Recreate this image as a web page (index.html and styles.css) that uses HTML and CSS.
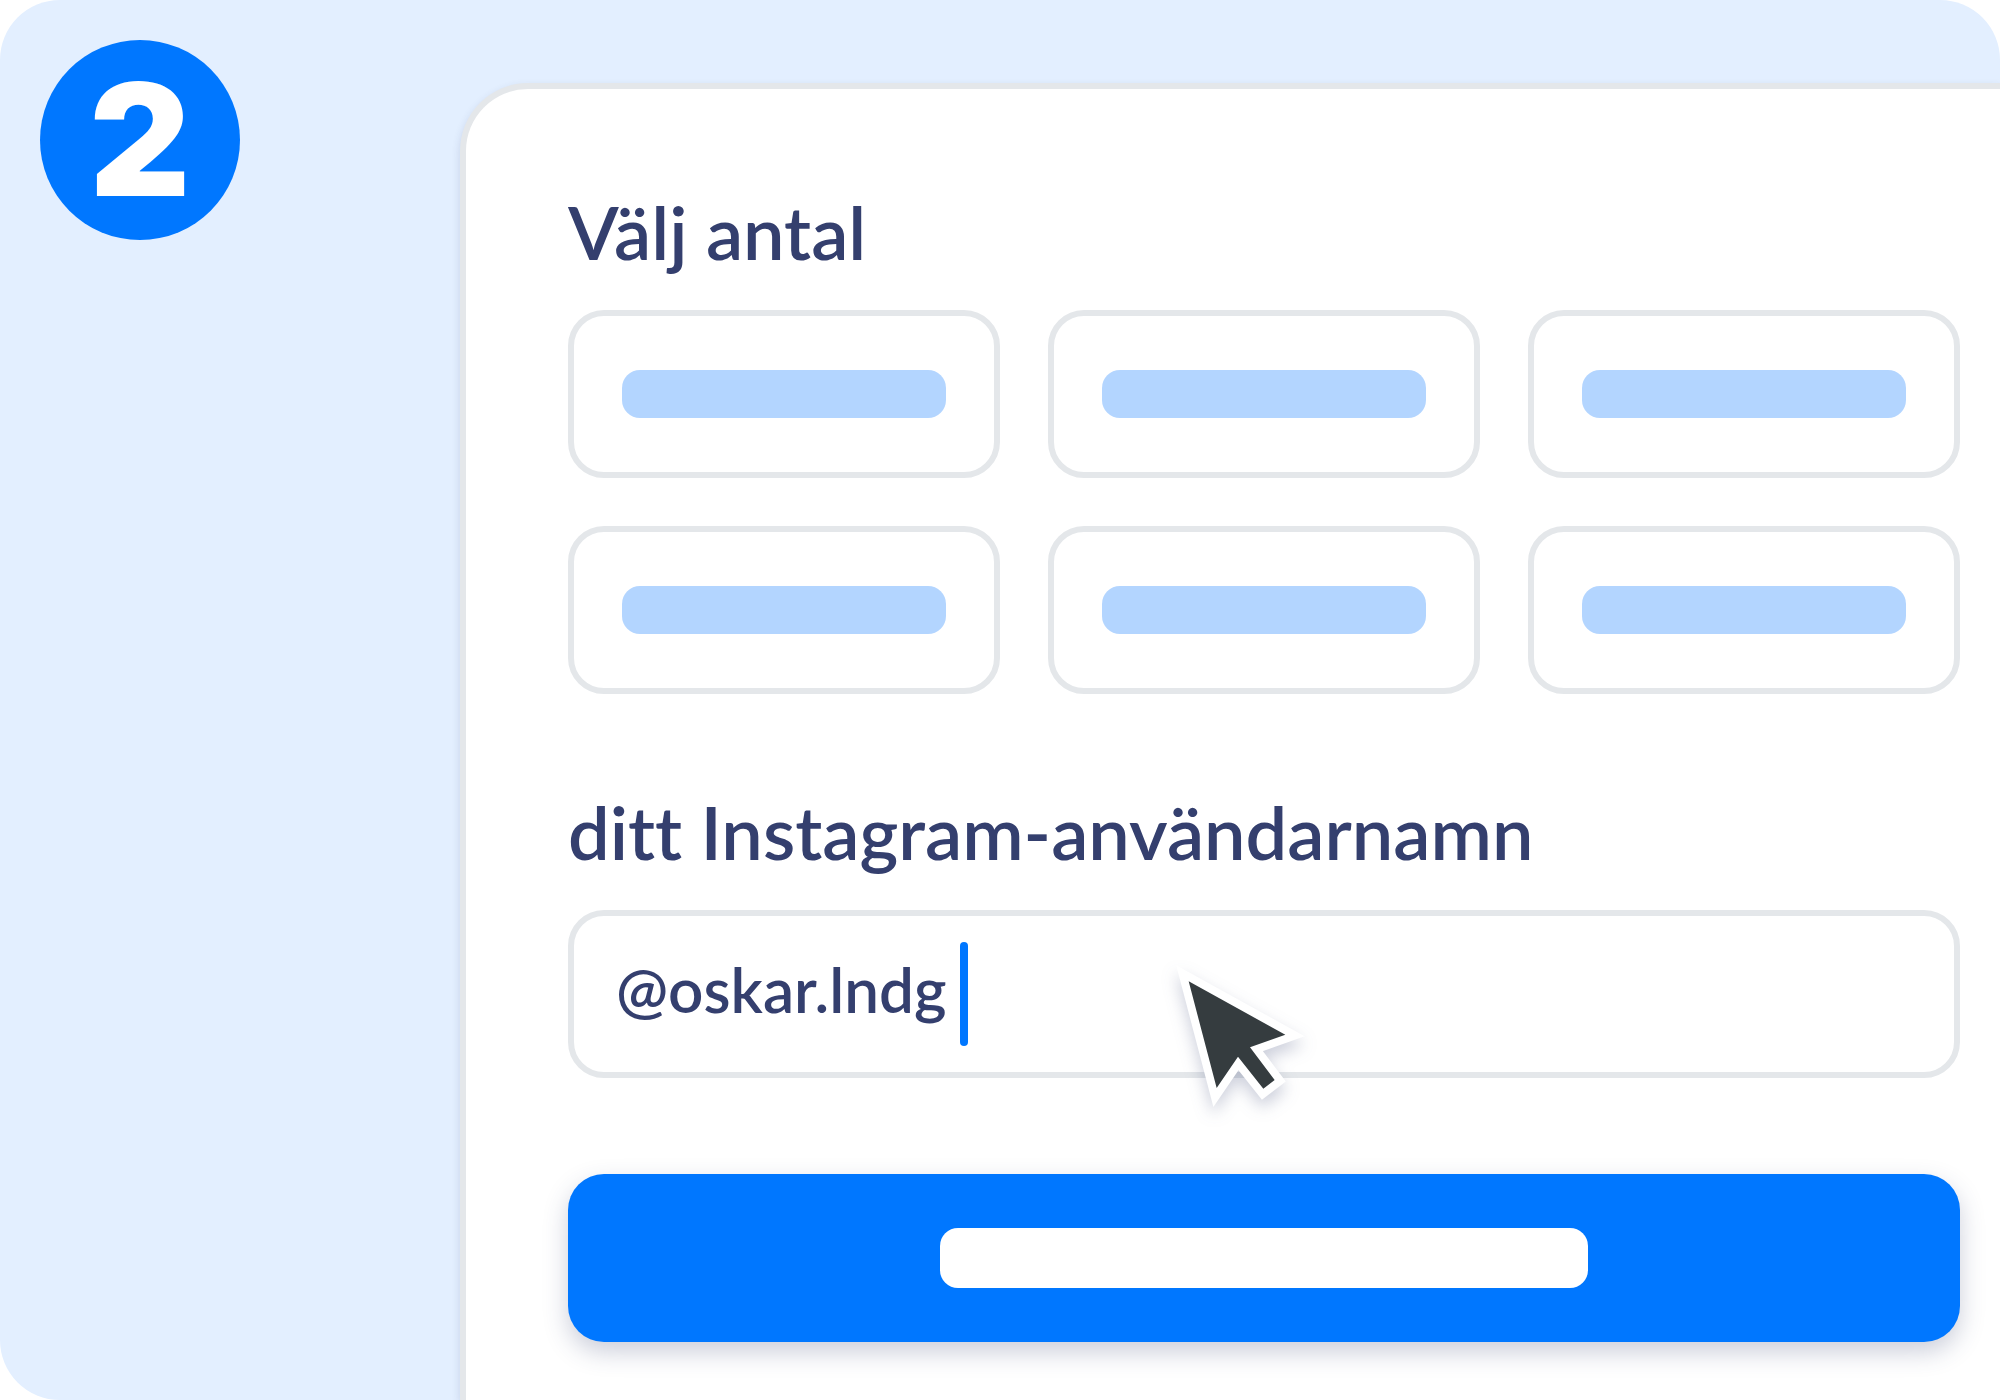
FILE: index.html
```
<!DOCTYPE html>
<html lang="sv">
<head>
  <meta charset="UTF-8" />
  <meta name="viewport" content="width=device-width, initial-scale=1.0"/>
  <title>Steg 2</title>
  <link rel="stylesheet" href="styles.css">
</head>
<body>
  <main class="stage">
    <aside class="step">
      <div class="badge">2</div>
    </aside>

    <form class="panel">
      <section>
        <h2 class="title">Välj antal</h2>
        <div class="options">
          <button type="button" class="option" aria-label="Alternativ 1"><span class="bar"></span></button>
          <button type="button" class="option" aria-label="Alternativ 2"><span class="bar"></span></button>
          <button type="button" class="option" aria-label="Alternativ 3"><span class="bar"></span></button>
          <button type="button" class="option" aria-label="Alternativ 4"><span class="bar"></span></button>
          <button type="button" class="option" aria-label="Alternativ 5"><span class="bar"></span></button>
          <button type="button" class="option" aria-label="Alternativ 6"><span class="bar"></span></button>
        </div>
      </section>

      <section>
        <label class="title" for="username">ditt Instagram-användarnamn</label>
        <div class="field">
          <input id="username" type="text" value="@oskar.lndg" spellcheck="false" autocomplete="off">
          <span class="caret"></span>
          <svg class="pointer" viewBox="0 0 600 600" aria-hidden="true">
            <path class="outline" d="M146 124 436 284 330 322 404 420 370 446 294 350 230 444Z"/>
            <path class="arrow" d="M146 124 436 284 330 322 404 420 370 446 294 350 230 444Z"/>
          </svg>
        </div>
      </section>

      <button type="button" class="submit" aria-label="Fortsätt"><span class="bar"></span></button>
    </form>
  </main>
</body>
</html>
```
FILE: styles.css
```
* {
  box-sizing: border-box;
}
body {
  margin: 0;
  background: #fff;
  color: #343f6e;
  font-family: Lato, "Liberation Sans", sans-serif;
  font-variant-ligatures: none;
}
.stage {
  display: flex;
  min-height: 100vh;
  background: #e3efff;
  border-radius: 60px;
  border-bottom-right-radius: 0;
  overflow: hidden;
}
.step {
  width: 23%;
  padding: 40px;
}
.badge {
  display: flex;
  align-items: center;
  justify-content: center;
  width: 200px;
  height: 200px;
  border-radius: 50%;
  background: #0077ff;
  color: #fff;
  font-family: Inter, sans-serif;
  font-size: 156px;
  font-weight: 900;
  line-height: 198px;
}
.panel {
  flex: 1;
  display: flex;
  flex-direction: column;
  gap: 96px;
  margin-top: 83px;
  padding: 101px 40px 58px 102px;
  background: #fff;
  border: 6px solid #e4e7ea;
  border-width: 6px 0 0 6px;
  border-top-left-radius: 68px;
  box-shadow: 0 4px 8px rgba(52, 63, 110, 0.16);
}
.title {
  display: block;
  margin: 0 0 36px;
  font-size: 74px;
  font-weight: 600;
  line-height: 84px;
}
.options {
  display: grid;
  grid-template-columns: repeat(3, 1fr);
  gap: 48px;
}
.option,
.field {
  height: 168px;
  background: #fff;
  border: 6px solid #e4e7ea;
  border-radius: 36px;
}
.option {
  padding: 0 48px;
}
.bar {
  display: block;
  height: 48px;
  border-radius: 18px;
  background: #b3d5ff;
}
.field {
  position: relative;
  display: flex;
  align-items: center;
  gap: 14px;
  padding: 0 42px;
}
.field input {
  field-sizing: content;
  padding: 0 0 10px;
  border: 0;
  outline: 0;
  background: none;
  color: inherit;
  font-family: inherit;
  font-size: 62px;
  font-weight: 600;
  font-variant-ligatures: none;
}
.caret {
  width: 8px;
  height: 104px;
  border-radius: 4px;
  background: #0077ff;
}
.pointer {
  position: absolute;
  top: 24px;
  left: 41%;
  width: 200px;
  height: 200px;
  filter: drop-shadow(0 8px 8px rgba(52, 63, 110, 0.25));
}
.outline {
  fill: #fff;
  stroke: #fff;
  stroke-width: 48;
  stroke-miterlimit: 10;
}
.arrow {
  fill: #353c3f;
}
.submit {
  height: 168px;
  border: 0;
  border-radius: 36px;
  background: #0077ff;
  box-shadow: 0 10px 24px rgba(52, 63, 110, 0.25);
}
.submit .bar {
  width: 648px;
  max-width: 80%;
  height: 60px;
  margin: 0 auto;
  background: #fff;
}
```
